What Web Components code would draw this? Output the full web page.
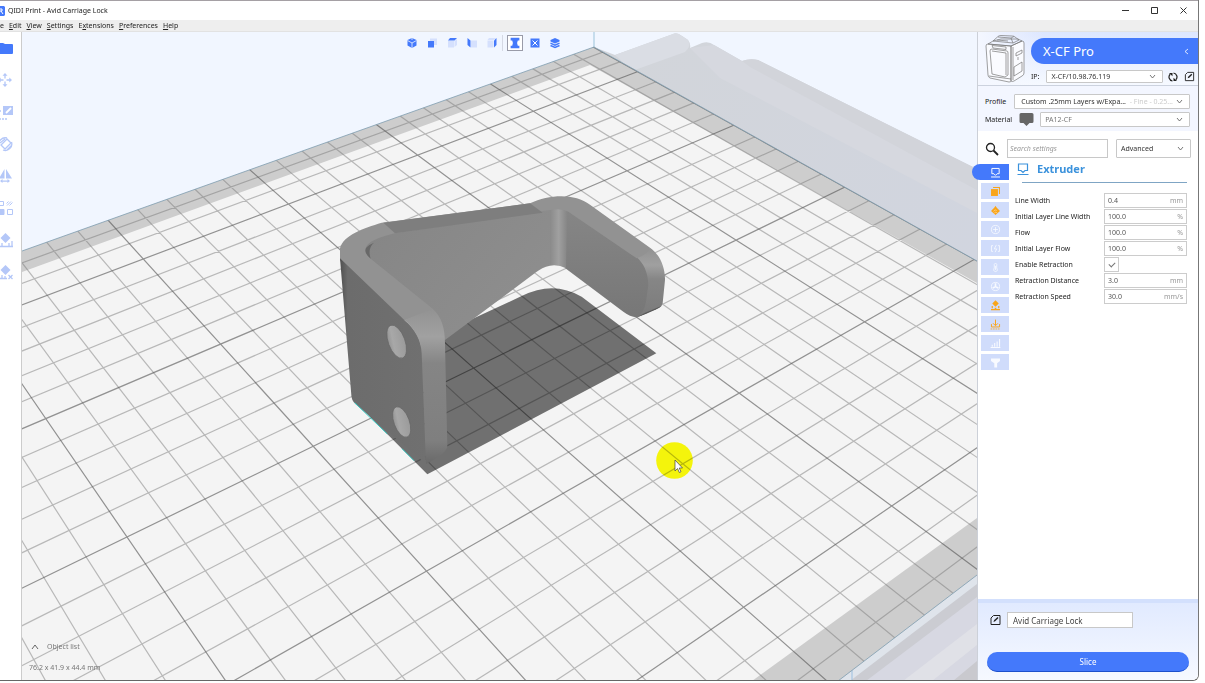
<!DOCTYPE html>
<html lang="en">
<head>
<meta charset="utf-8">
<title>QIDI Print - Avid Carriage Lock</title>
<style>
html,body{margin:0;height:100%;background:#fff}
body{font:7px/10px "Noto Sans","Open Sans",sans-serif;color:#222;overflow:hidden}
</style>
</head>
<body>
<print-app></print-app>
<script>
const base = `:host,*{box-sizing:border-box}button,input,select{font:inherit;color:inherit;margin:0;outline:0}button{border:0;padding:0;background:none;display:grid;place-items:center}svg{display:block}`;
function define(name, html, setup) {
  customElements.define(name, class extends HTMLElement {
    connectedCallback() {
      if (this.shadowRoot) return;
      const root = this.attachShadow({ mode: 'open' });
      const t = document.createElement('template');
      t.innerHTML = typeof html === 'function' ? html(this) : html;
      root.append(t.content.cloneNode(true));
      if (setup) setup(root, this);
    }
  });
}

const edit = '<path d="M4 1.500H10.500V10.500H1.500V4Z" fill="none" stroke="#222"/><path d="M4 8l.5-1.800L8 3l1 1-3.300 3.300Z" fill="#222"/>';
const icons = {
  folder: '<path d="M0 3h6l2 1h7q1 0 1 1v8q0 1-1 1H0Z" fill="#4479fb"/>',
  move: '<path d="M8 3v3.500M8 9.500V13M3 8h3.500M9.500 8H13" fill="none" stroke="#b4c7f8" stroke-width="1.300"/><path d="M8 1l2.500 2.700h-5ZM8 15l2.500-2.700h-5ZM1 8l2.700-2.500v5ZM15 8l-2.700-2.500v5Z" fill="#b4c7f8"/>',
  scale: '<path d="M6 2h10v9H6Z" fill="#b4c7f8"/><path d="M9 9l5-5" stroke="#fff" stroke-width="1.800"/><path d="M0 7h4M2 15h9" stroke="#b4c7f8" stroke-width="1.500" stroke-dasharray="2 1"/>',
  rotate: '<g fill="none" stroke="#b4c7f8" stroke-width="1.300"><path d="M2 10A6.500 6.500 0 0 1 10 2M6 14A6.500 6.500 0 0 0 14.500 6M3 7l5-4M15 9l-5 5"/><path d="M4 9l6-6 4 4-6 6Z"/></g>',
  mirror: '<path d="M7.500 1v9.500H2ZM9 1v9.500h6ZM3 13l2.500-2v1.500h5V11l2.500 2-2.500 2v-1.300h-5V15Z" fill="#b4c7f8"/>',
  mesh: '<g stroke="#b4c7f8" fill="none"><path d="M2.500 1.500h4v4h-4ZM10.500 9.500h5v5h-5ZM10 5.500l4-4M12.500 5.500l3-3M9.500 3.500l2-2"/><path d="M2 9.500h5v5H2Z" fill="#b4c7f8"/></g>',
  support: '<path d="M8.500 1l5 5-5 5-5-5Z" fill="#b4c7f8"/><path d="M0 14.500h16M2 14V9M5 14v-3M12 14v-3M15 14V9" stroke="#b4c7f8" stroke-width="1.300"/>',
  block: '<path d="M8.500 1l5 5-5 5-5-5Z" fill="#b4c7f8"/><path d="M0 14.500h10M2 14V9M5 14v-3M8 14v-2M11.500 11l4 4M15.500 11l-4 4" stroke="#b4c7f8" stroke-width="1.300"/>',
  iso: '<path d="M8 3l4.500 2v5.500L8 13l-4.500-2.500V5Z" fill="#4479fb"/><path d="M3.500 5.500L8 8l4.500-2.500M8 8V13M8 3v2" stroke="#dce7ff" fill="none" stroke-width=".9"/>',
  front: '<path d="M6 3.500h7V10h-3V6H6Z" fill="#d5e0fd"/><path d="M4 6h6v6.500H4Z" fill="#4479fb"/>',
  top: '<path d="M4 6h6v6.500H4ZM10.500 6l2.500-2v6l-2.500 2Z" fill="#d5e0fd"/><path d="M4 5.500L6 3h7l-2.500 2.500Z" fill="#4479fb"/>',
  left: '<path d="M7 5.500h6v7H7Z" fill="#d5e0fd"/><path d="M3.500 3l3 2.500v7l-3-2.500Z" fill="#4479fb"/>',
  right: '<path d="M3.500 5.500h6v7h-6ZM5 3h7L9.500 5H3.500Z" fill="#d5e0fd"/><path d="M12.500 3v7L10 12.500V5.500Z" fill="#4479fb"/>',
  solid: '<path d="M3 2h10v3h-1.800Q9.500 8 11.200 11H13v3H3v-3h1.800Q6.500 8 4.800 5H3Z" fill="#4479fb"/>',
  xray: '<path d="M3.500 3.500h9v9h-9Z" fill="#4479fb"/><path d="M5.500 5.500l5 5M10.500 5.500l-5 5" stroke="#fff"/>',
  layers: '<path d="M8 3l4.500 2v1.500L8 8.500 3.500 6.500V5Z" fill="#4479fb"/><path d="M3.500 8.200l4.500 2 4.500-2M3.500 10.500l4.500 2 4.500-2" fill="none" stroke="#4479fb" stroke-width="1.400"/>',
  extruder: '<path d="M3.500 3h9v6.500h-2.500L8 11.500 6 9.500H3.500ZM2.500 13.500h11" fill="none" stroke="currentColor" stroke-width="1.200"/>',
  shell: '<path d="M5 2.500h8.500v8.500h-1.300V3.800H5Z" fill="#f9a51a"/><path d="M2.500 5H11V13.500H2.500Z" fill="#f9a51a"/>',
  infill: '<path d="M8 2q1 2 5.500 6.500L8 13.500 2.500 8.500Q7 4 8 2Z" fill="#f9a51a"/><path d="M5.500 9q2-3 4-1M6.500 11q2-2 3.500 0" fill="none" stroke="#fbd28a"/>',
  plus: '<g fill="none" stroke="#f8faff"><circle cx="8" cy="8" r="5"/><path d="M5 8h6M8 5v6"/></g>',
  speed: '<path d="M5 4.500H3v7H5M11 4.500h2v7H11M9 3.500L6.500 8.500h3L7.500 12.500" fill="none" stroke="#f8faff"/>',
  temp: '<path d="M6.500 4q1.500-3 3 0v4.500q2 4-1.500 4.500-3.500-.5-1.500-4.500ZM8 6v5" fill="none" stroke="#f8faff"/>',
  fan: '<circle cx="8" cy="8" r="5" fill="none" stroke="#f8faff"/><path d="M8 8V4M8 8l-3.500 2M8 8l3.500 2" stroke="#f8faff" stroke-width="2"/>',
  sup: '<path d="M8 1.500l4 4-4 4-4-4Z" fill="#f9a51a"/><path d="M4 8.500v3M12 8.500v3M2.500 13h11M7 11.500h2" stroke="#f9a51a" stroke-width="1.500"/>',
  adhesion: '<path d="M8 2v7M5 6.500L8 9.500 11 6.500M3 7.500v3.500h10V7.500" fill="none" stroke="#f9a51a" stroke-width="1.200"/><path d="M2 13.500h12" stroke="#f9a51a" stroke-dasharray="2 1"/>',
  bars: '<path d="M4 12V9.500M7 12V7.500M10 12V5.500M13 12V2.500M2 13h12" stroke="#f8faff" stroke-width="1.300"/>',
  funnel: '<path d="M2.500 3h11v3L10 9v5H6.500V9l-4-3Z" fill="#f8faff"/>'
};
const svg = (n, s = 16) => `<svg width="${s}" height="${s}" viewBox="0 0 16 16" aria-hidden="true">${icons[n]}</svg>`;

define('title-bar', `<style>${base}
:host{display:flex;align-items:center;height:20px;background:#fff;border-top:1px solid #a5a0a4}
svg.logo{flex:none}
h1{font:inherit;margin:0 auto 0 3px;color:#222}
button{width:29px;height:18px}
</style>
<svg class="logo" width="5" height="10" viewBox="0 0 5 10"><path d="M0 0h4l1 1v8l-1 1H0Z" fill="#4479fb"/><path d="M0 3h2v2H0M1 5l2 3" fill="none" stroke="#fff"/></svg>
<h1>QIDI Print - Avid Carriage Lock</h1>
<button aria-label="Minimize"><svg width="7" height="7"><path d="M0 3.500h7" stroke="#333"/></svg></button>
<button aria-label="Maximize"><svg width="7" height="7"><path d="M.5.5h6v6h-6Z" fill="none" stroke="#333"/></svg></button>
<button aria-label="Close"><svg width="7" height="7"><path d="M.5.5l6 6M6.500.5l-6 6" stroke="#333"/></svg></button>`);

define('menu-bar', `<style>${base}
:host{display:block;background:#eee;border-bottom:1px solid #e2e2e2;height:12px}
nav{display:flex;gap:5px;line-height:12px}
a{color:#222;text-decoration:none}
</style><nav><a href="#file" aria-label="File">e</a><a href="#edit"><u>E</u>dit</a><a href="#view"><u>V</u>iew</a><a href="#settings"><u>S</u>ettings</a><a href="#extensions">E<u>x</u>tensions</a><a href="#preferences"><u>P</u>references</a><a href="#help"><u>H</u>elp</a></nav>`);

define('tool-rail', `<style>${base}
:host{display:block;background:#fff;border-right:1px solid #ccc;overflow:hidden;padding-top:8px}
div{display:grid;gap:16px;justify-content:start;margin-left:-3px}
</style><div>${['folder','move','scale','rotate','mirror','mesh','support','block'].map(n => `<button aria-label="${n}">${svg(n)}</button>`).join('')}</div>`);

define('view-bar', `<style>${base}
:host{display:flex;gap:4px;align-items:center}
i{width:1px;height:16px;background:#d5d9e4;margin-left:-2px}
.on{background:#fff;border:1px solid #999ba8}
button{width:16px;height:16px}
</style>${['iso','front','top','left','right'].map(n => `<button aria-label="${n} view">${svg(n)}</button>`).join('')}<i></i><button class="on" aria-label="solid">${svg('solid', 14)}</button>${['xray','layers'].map(n => `<button aria-label="${n}">${svg(n)}</button>`).join('')}`);

define('plate-scene', `<style>:host{display:block;min-width:0;min-height:0}svg{display:block;width:100%;height:100%}</style>
<svg viewBox="22 32 955 648" preserveAspectRatio="xMidYMid slice" role="img" aria-label="Model on build plate">
<defs>
<clipPath id="plate"><path d="M594 47L977 261V575L838 681H22V251Z"/></clipPath>
<linearGradient id="fillet"><stop offset="0" stop-color="#8a8a8a"/><stop offset=".5" stop-color="#a0a0a0"/><stop offset="1" stop-color="#858585"/></linearGradient>
<linearGradient id="endA" x2="0" y2="1"><stop offset="0" stop-color="#919191"/><stop offset=".25" stop-color="#a0a0a0"/><stop offset=".45" stop-color="#868686"/><stop offset="1" stop-color="#7b7b7b"/></linearGradient>
<linearGradient id="endB" x2="0" y2="1"><stop offset="0" stop-color="#929292"/><stop offset=".18" stop-color="#a1a1a1"/><stop offset=".35" stop-color="#858585"/><stop offset=".85" stop-color="#7f7f7f"/><stop offset="1" stop-color="#696969"/></linearGradient>
<linearGradient id="front"><stop offset="0" stop-color="#505050"/><stop offset=".09" stop-color="#6c6c6c"/><stop offset="1" stop-color="#707070"/></linearGradient>
<linearGradient id="wall" x2="1" y2=".6"><stop offset="0" stop-color="#858585"/><stop offset="1" stop-color="#8e8e8e"/></linearGradient>
<linearGradient id="inner" x2="0" y2="1"><stop offset="0" stop-color="#868686"/><stop offset="1" stop-color="#777"/></linearGradient>
<linearGradient id="hole" x2="1" y2=".3"><stop offset="0" stop-color="#8c8c8c"/><stop offset=".4" stop-color="#a8a8a8"/><stop offset="1" stop-color="#9c9c9c"/></linearGradient>
<linearGradient id="housing" gradientUnits="userSpaceOnUse" x1="600" y1="60" x2="977" y2="250"><stop offset="0" stop-color="#d2d5da"/><stop offset="1" stop-color="#d1d5df"/></linearGradient>
</defs>
<path d="M22 32H977V680H22Z" fill="#f1f6ff"/>
<path d="M594 47L615 55 673 34Q677 32 682 36L688 40Q691 44 690 48L702 43Q709 41 714 45L742 61Q750 58 758 60L977 169V262Z" fill="url(#housing)"/>
<path d="M615 55L673 34Q677 32 682 36L688 40Q692 46 685 52L632 71Z" fill="#dadde4"/>
<path d="M690 48L714 45 742 61 977 190V213L720 78Z" fill="#d6d8df"/>
<path d="M742 61Q750 58 758 60L977 169V190L750 67Z" fill="#d2d4da"/>
<path d="M594 32V47" stroke="#9bc3da"/>
<path d="M977 575L838 681H977Z" fill="#cbccd2"/>
<path d="M977 575L838 681H850L977 584Z" fill="#dfe4eb"/>
<path d="M977 597L866 681H977Z" fill="#d7d8e2"/>
<path d="M977 624L903 681H932L977 645Z" fill="#e0e1e7"/>
<path d="M977 661L953 681H977Z" fill="#c9c9ce"/>
<path d="M852 670V681" stroke="#9bbfe0"/>
<g clip-path="url(#plate)">
<path d="M22 32H977V681H22Z" fill="#cdcdcd"/>
<path d="M22 272L590 65 977 283V518L752 681H22Z" fill="#f4f4f4"/>
<g id="grid" fill="none"></g>
</g>
<path d="M22 251L594 47 977 261M977 575L838 681" fill="none" stroke="#7d9cae" stroke-width=".8"/>
<g transform="translate(320 180) scale(.33333)">
<path d="M100 660L360 450 455 418 605 348Q700 300 785 350L1009 520 322 883Z" fill="#000" fill-opacity=".54"/>
<path d="M735 85L955 220 1000 300 980 400 950 412Q930 410 910 395L735 264Z" fill="url(#inner)"/>
<path d="M130 215V170L225 140 690 80V257Q665 262 648 277L375 480 300 440Z" fill="url(#wall)"/>
<path d="M690 80H742L738 265Q715 253 690 257Z" fill="url(#fillet)"/>
<path d="M950 232L990 203C1018 222 1036 260 1035 300L1028 370Q1026 379 1018 383L950 412Q972 400 978 365L985 315C984 275 970 250 950 232Z" fill="url(#endA)"/>
<path d="M976 398L1024 378Q1015 388 950 412Z" fill="#585858"/>
<path d="M60 205C70 165 130 145 185 128L630 70C690 42 765 40 810 74L990 203Q985 222 950 235L745 95Q725 83 690 90L225 160C165 175 130 190 138 218Q142 228 152 236L340 388 253 422 60 242Z" fill="#929292"/>
<path d="M190 128L630 70 668 98 225 160Z" fill="#7e7e7e"/>
<path d="M152 236Q128 216 140 202 148 193 162 188 142 205 152 236Z" fill="#686868"/>
<path d="M60 235L253 420C290 450 306 485 305 520L318 852 106 672Q94 660 94 645Z" fill="url(#front)"/>
<path d="M253 420L338 386C365 410 375 445 375 490L382 800Q379 820 318 852L305 520C304 480 282 445 253 420Z" fill="url(#endB)"/>
<g fill="url(#hole)" stroke="#666" stroke-width="2"><ellipse cx="230" cy="485" rx="25" ry="52" transform="rotate(-20 230 485)"/><ellipse cx="245" cy="726" rx="23" ry="48" transform="rotate(-20 245 726)"/></g>
<path d="M104 668L202 762M246 806L282 842" stroke="#35c8c0" stroke-width="3"/>
</g>
<circle cx="674.500" cy="460.500" r="18.300" fill="#ffff0c" style="mix-blend-mode:multiply"/>
<path d="M675 460v11l2.500-2.500 1.800 4 1.700-.8-1.800-3.700h3.300Z" fill="#fff" stroke="#444" stroke-width=".7"/>
</svg>`, root => {
  // Perspective map from grid cells (u, v) to the view, solved from four known nodes.
  const pts = [[0,0,533.3,111.2],[20,5,891.7,506],[10,20,127,537],[0,15,143.3,259]];
  const m = [];
  for (const [u, v, x, y] of pts) {
    m.push([u, v, 1, 0, 0, 0, -u * x, -v * x, x]);
    m.push([0, 0, 0, u, v, 1, -u * y, -v * y, y]);
  }
  for (let i = 0; i < 8; i++) {
    let p = i;
    for (let r = i; r < 8; r++) if (Math.abs(m[r][i]) > Math.abs(m[p][i])) p = r;
    [m[i], m[p]] = [m[p], m[i]];
    for (let r = 0; r < 8; r++) {
      if (r === i) continue;
      const f = m[r][i] / m[i][i];
      for (let c = i; c < 9; c++) m[r][c] -= f * m[i][c];
    }
  }
  const h = m.map((row, i) => row[8] / row[i]);
  const at = (u, v) => {
    const w = h[6] * u + h[7] * v + 1;
    return [(h[0] * u + h[1] * v + h[2]) / w, (h[3] * u + h[4] * v + h[5]) / w].map(n => n.toFixed(2)).join(' ');
  };
  let minor = '', major = '';
  for (let k = -6; k <= 32; k++) {
    const d = `M${at(k, -6)}L${at(k, 25)}M${at(-4, k)}L${at(30, k)}`;
    if (k % 5) minor += d; else major += d;
  }
  root.getElementById('grid').innerHTML = `<path d="${minor}" stroke="#777" stroke-opacity=".48" stroke-width="1.200"/><path d="${major}" stroke="#555" stroke-opacity=".62" stroke-width="1.200"/>`;
});

define('stage-view', `<style>${base}
:host{display:grid;min-width:0;min-height:0;overflow:hidden;grid-template:minmax(0,1fr)/minmax(0,1fr)}
plate-scene,.over{grid-area:1/1}
.over{display:flex;flex-direction:column;justify-content:space-between;z-index:1;padding:3px 0 7px;color:#777}
view-bar{margin-left:40%}
.info{padding-left:7px;display:grid;gap:11px;justify-items:start}
.info button{display:flex;align-items:center;gap:8px;padding-left:2px}
p{margin:0}
</style><plate-scene></plate-scene><div class="over"><view-bar></view-bar><div class="info"><button><svg width="8" height="6"><path d="M1 5l3-4 3 4" fill="none" stroke="#666"/></svg>Object list</button><p>76.2 x 41.9 x 44.4 mm</p></div></div>`);

define('drop-down', el => `<style>${base}
:host{display:grid;min-width:0;color:#333}
select,svg,slot{grid-area:1/1}
select{appearance:none;width:100%;height:100%;border:1px solid #c8c8c8;border-radius:1px;background:#fff;padding:0 14px 0 var(--inset,4px)}
svg,slot{z-index:1;pointer-events:none;align-self:center;justify-self:end}
svg{margin-right:7px}
slot{display:block;margin-right:17px;color:#ccc}
</style><select aria-label="${el.getAttribute('label')}"><option>${el.getAttribute('value')}</option></select><slot></slot><svg width="7" height="5"><path d="M1 1l2.500 3L6 1" fill="none" stroke="#555" stroke-width=".8"/></svg>`);

define('machine-header', `<style>${base}
:host{display:block;background:linear-gradient(90deg,#f4f7ff,transparent 30%),linear-gradient(#dce6ff,#f6f9ff);border-bottom:1px solid #ccd2de;height:54px;padding:3px 0 0 6px}
.row{display:grid;grid-template-columns:43px 1fr;gap:4px}
.pill{width:100%;height:26px;border-radius:13px 0 0 13px;background:#4479fb;color:#fff;font-size:13px;line-height:16px;display:flex;align-items:center;justify-content:space-between;padding:0 9px 0 12px;margin-top:3px}
.ip{display:flex;align-items:center;height:13px;margin:6px 1px 0 0}
.ip drop-down{flex:1;height:13px;margin:0 2px 0 7px}
.ip button{width:16px;height:12px}
</style><div class="row">
<svg width="43" height="48" viewBox="0 0 43 48" fill="#fafbff" stroke="#777" stroke-width=".7"><path d="M2 11Q2 9 4 9L27 11V46Q27 47 25 47L6 43Q4 42 4 40ZM27 11L38 6Q40 6 40 8V38Q40 40 38 41L30 46Q28 47 27 46Z"/><path d="M4 9L9 6 17 4 34 4 38 6 27 11ZM9 6L14 1.500Q15 .5 17 .5L28 1Q30 1 31 2L35 5 29 8ZM14 2L27 3 29 8M27 3L30 1.500M6 16Q6 14 8 14L23 16Q24 16 24 18V40L21 42 8 39ZM8 16L22 18V40M8 10.500L22 12V14.500L9 13ZM13 5L24 6M5 41L27 44M32 18L38 15V18L32 21ZM30 32L38 27V36L30 41ZM34 22v3M29 12V45" fill="none"/></svg>
<div><button class="pill">X-CF Pro<svg width="5" height="7"><path d="M4 1L1 3.500 4 6" fill="none" stroke="#fff" stroke-width=".8"/></svg></button>
<div class="ip"><span>IP:</span><drop-down label="Printer address" value="X-CF/10.98.76.119"></drop-down><button aria-label="Refresh"><svg width="10" height="10" viewBox="0 0 10 10"><path d="M4.500 9A4 4 0 0 1 2.200 2.200M5.500 1A4 4 0 0 1 7.800 7.800" fill="none" stroke="#222" stroke-width="1.200"/><path d="M1 1h3.500v3.300ZM9 9H5.500V5.700Z" fill="#222"/></svg></button><button aria-label="Edit address"><svg width="11" height="11" viewBox="0 0 12 12">${edit}</svg></button></div></div></div>`);

define('profile-box', `<style>${base}
:host{display:grid;gap:3px;background:#f3f6ff;padding:8px 8px 4px 7px;height:45px}
div{display:flex;align-items:center;height:15px}
drop-down{flex:1;height:15px}
.m{color:#777;margin-left:6px}
.p{margin-left:8px;--inset:6px}
svg{margin-left:7px}
</style><div><span>Profile</span><drop-down class="p" label="Profile" value="Custom .25mm Layers w/Expa...">- Fine - 0.25...</drop-down></div>
<div><span>Material</span><svg width="15" height="15" viewBox="0 0 15 15"><path d="M2 1h11q1.500 0 1.500 1.500v7q0 1.500-1.500 1.500h-2.500l-3 3-3-3H2Q.5 11 .5 9.500v-7Q.5 1 2 1Z" fill="#666"/></svg><drop-down class="m" label="Material" value="PA12-CF"></drop-down></div>`);

define('search-row', `<style>${base}
:host{display:grid;grid-template-columns:14px 1fr 75px;gap:8px;padding:0 7px 0 7px;height:18px;margin-top:8px;align-items:center}
input{width:100%;height:19px;border:1px solid #c8c8c8;padding:0 2px;background:#fff}
input::placeholder{color:#999;font-style:italic;opacity:1}
drop-down{height:19px}
label{display:grid;place-items:center}
</style><label for="q" aria-label="Search"><svg width="14" height="14" viewBox="0 0 14 14"><circle cx="5.500" cy="5.500" r="4" fill="none" stroke="#222" stroke-width="1.300"/><path d="M8.500 8.500l4.500 4.500" stroke="#222" stroke-width="1.800"/></svg></label><input id="q" placeholder="Search settings"><drop-down label="Visibility" value="Advanced"></drop-down>`);

define('setting-row', el => `<style>${base}
:host{display:grid;grid-template-columns:1fr 83px;height:16px;align-items:start}
label,.v{height:15px;line-height:15px}
.v{display:grid;border:1px solid #ccc;background:#fff;line-height:13px}
.v>*{grid-area:1/1}
.v input{border:0;padding:0 3px;width:100%;height:13px;background:none;color:#555}
span{justify-self:end;color:#999;padding-right:3px}
.c{appearance:none;width:15px;height:15px;border:1px solid #ccc;display:grid;place-items:center}
.c:checked::before{content:"";width:5px;height:3px;border:solid #777;border-width:0 0 1px 1px;transform:rotate(-45deg);margin-top:-2px}
</style><label for="f">${el.getAttribute('label')}</label>` + (el.hasAttribute('check') ? '<input class="c" id="f" type="checkbox" checked>' :
`<div class="v"><input id="f" value="${el.getAttribute('value')}"><span>${el.getAttribute('unit')}</span></div>`));

define('settings-pane', `<style>${base}
:host{display:grid;grid-template-columns:31px 1fr;flex:1;min-height:0;padding-top:7px;align-items:start}
nav{display:grid;gap:3px;padding-left:3px}
nav button{height:16px;background:#d0dcfb;color:#fff}
nav .on{background:#4479fb;margin-left:-9px;padding-left:9px;border-radius:8px 0 0 8px}
section{padding:0 11px 0 6px}
h2{display:flex;align-items:center;gap:6px;margin:0 0 10px 7px;font-size:11px;line-height:16px;height:19px;color:#3b92dc;border-bottom:1px solid #7fa5c4;padding-bottom:8px}
h2 svg{margin-left:-7px}
</style><nav>${['extruder','shell','infill','plus','speed','temp','fan','sup','adhesion','bars','funnel'].map((n, i) => `<button${i ? '' : ' class="on"'} aria-label="${n}">${svg(n, 13)}</button>`).join('')}</nav>
<section><h2>${svg('extruder')}Extruder</h2>
<setting-row label="Line Width" value="0.4" unit="mm"></setting-row>
<setting-row label="Initial Layer Line Width" value="100.0" unit="%"></setting-row>
<setting-row label="Flow" value="100.0" unit="%"></setting-row>
<setting-row label="Initial Layer Flow" value="100.0" unit="%"></setting-row>
<setting-row label="Enable Retraction" check></setting-row>
<setting-row label="Retraction Distance" value="3.0" unit="mm"></setting-row>
<setting-row label="Retraction Speed" value="30.0" unit="mm/s"></setting-row></section>`);

define('slice-panel', `<style>${base}
:host{display:block;border-top:4px solid #d3e0fd;background:linear-gradient(#e1eaff,#f6f9ff);padding:9px 9px 8px;border-radius:0 0 6px 0}
div{display:flex;align-items:center;gap:5px;margin-left:2px}
input{width:126px;height:16px;border:1px solid #c8c8c8;background:#fff;padding:0 5px;color:#444;font-size:8px}
label{display:grid}
.go{width:100%;height:20px;border-radius:10px;background:#4479fb;color:#fff;border-bottom:1px solid #1d50cb;margin-top:24px;font-size:8px}
</style><div><label for="job" aria-label="Job name"><svg width="13" height="12" viewBox="0 0 12 12">${edit}</svg></label><input id="job" value="Avid Carriage Lock"></div><button class="go">Slice</button>`);

define('side-panel', `<style>${base}:host{display:flex;flex-direction:column;min-height:0;border-left:1px solid #ccd0d8;background:#fff;position:relative;z-index:2;border-radius:0 0 6px 0}</style>
<machine-header></machine-header><profile-box></profile-box><search-row></search-row><settings-pane></settings-pane><slice-panel></slice-panel>`);

define('print-app', `<style>${base}
:host{display:grid;grid-template-rows:auto auto minmax(0,1fr);height:calc(100vh - 2px);margin-right:6px;border-right:1px solid #777;border-bottom:1px solid #666;border-bottom-right-radius:6px}
main{display:grid;grid-template-columns:22px minmax(0,1fr) 221px;min-height:0}
</style><title-bar></title-bar><menu-bar></menu-bar><main><tool-rail></tool-rail><stage-view></stage-view><side-panel></side-panel></main>`);
</script>
</body>
</html>
